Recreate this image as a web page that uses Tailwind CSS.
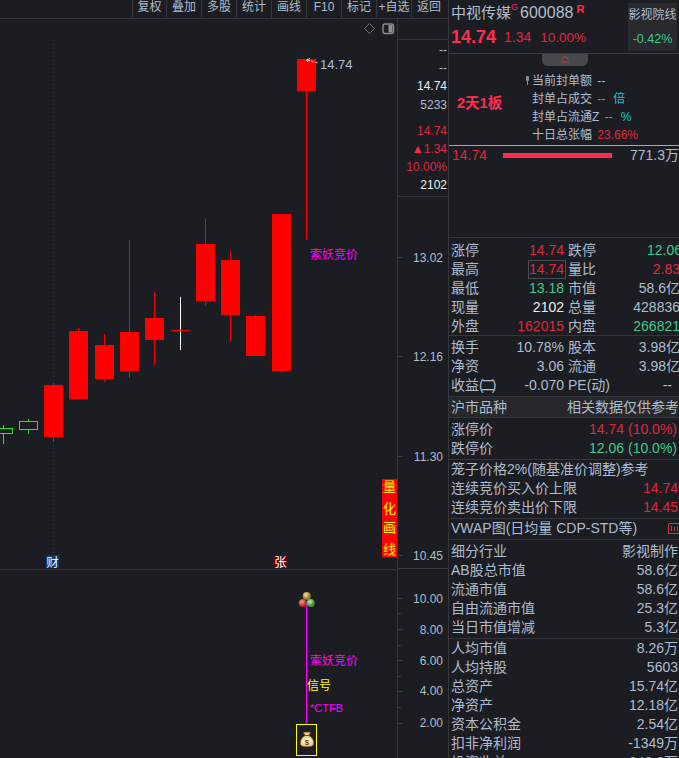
<!DOCTYPE html>
<html lang="zh-CN">
<head>
<meta charset="UTF-8" />
<meta name="viewport" content="width=device-width, initial-scale=1.0"/>
<title>中视传媒 600088</title>
<script src="https://cdn.jsdelivr.net/npm/@tailwindcss/browser@4"></script>
</head>
<body class="bg-[#1c1d22]">
<div class="w-[679px] h-[758px] overflow-hidden flex bg-[#1c1d22] text-[#aebccf] font-['Liberation_Sans','Noto_Sans_CJK_SC',sans-serif]">

  <!-- Left: toolbar + chart -->
  <div class="w-[449px] h-full flex flex-col border-r border-[#34363a]">
    <div class="h-[19px] shrink-0 flex justify-end border-b border-[#34363a] text-[12px] leading-[15px]">
      <div class="w-[34px] text-center border-l border-[#34363a]">复权</div>
      <div class="w-[35px] text-center border-l border-[#34363a]">叠加</div>
      <div class="w-[35px] text-center border-l border-[#34363a]">多股</div>
      <div class="w-[35px] text-center border-l border-[#34363a]">统计</div>
      <div class="w-[35px] text-center border-l border-[#34363a]">画线</div>
      <div class="w-[35px] text-center border-l border-[#34363a]">F10</div>
      <div class="w-[35px] text-center border-l border-[#34363a]">标记</div>
      <div class="w-[35px] text-center border-l border-[#34363a] whitespace-nowrap overflow-hidden">+自选</div>
      <div class="w-[37px] pr-[2px] text-center border-l border-[#34363a]">返回</div>
    </div>

    <div class="flex-1 flex min-h-0">
      <!-- Plot (free canvas: page coordinates in the viewBox) -->
      <svg class="w-[397px] h-[739px] shrink-0 block" viewBox="0 19 397 739" shape-rendering="crispEdges" font-size="12">
        <line x1="53.5" y1="40" x2="53.5" y2="555" stroke="#34363c" stroke-dasharray="1 3"/>
        <line x1="0" y1="569.5" x2="397" y2="569.5" stroke="#34363a"/>

        <!-- hollow green candles -->
        <g stroke="#19f019" fill="#1c1d22">
          <line x1="3.5" y1="425" x2="3.5" y2="444"/>
          <rect x="-2" y="428.5" width="14" height="5"/>
          <line x1="28.5" y1="419" x2="28.5" y2="434"/>
          <rect x="19.5" y="421.5" width="18" height="8"/>
        </g>

        <!-- wicks -->
        <g stroke="#ff0000">
          <line x1="53.5" y1="383" x2="53.5" y2="442"/>
          <line x1="78.5" y1="328" x2="78.5" y2="399"/>
          <line x1="104.5" y1="334" x2="104.5" y2="382"/>
          <line x1="129.5" y1="240" x2="129.5" y2="378"/>
          <line x1="154.5" y1="292" x2="154.5" y2="365"/>
          <line x1="205.5" y1="219" x2="205.5" y2="306"/>
          <line x1="230.5" y1="251" x2="230.5" y2="341"/>
          <line x1="255.5" y1="315" x2="255.5" y2="356"/>
          <line x1="281.5" y1="214" x2="281.5" y2="373"/>
          <line x1="306.5" y1="59" x2="306.5" y2="240"/>
        </g>

        <!-- doji -->
        <line x1="180.5" y1="297" x2="180.5" y2="350" stroke="#ffffff"/>
        <line x1="171" y1="330.5" x2="190" y2="330.5" stroke="#ff0000"/>

        <!-- candle bodies -->
        <g fill="#ff0000">
          <rect x="44" y="385" width="19" height="52"/>
          <rect x="69" y="331" width="19" height="68"/>
          <rect x="95" y="345" width="19" height="34"/>
          <rect x="120" y="332" width="19" height="39"/>
          <rect x="145" y="318" width="19" height="22"/>
          <rect x="196" y="244" width="19" height="57"/>
          <rect x="221" y="260" width="19" height="55"/>
          <rect x="246" y="316" width="19" height="40"/>
          <rect x="272" y="214" width="19" height="157"/>
          <rect x="297" y="59" width="19" height="32"/>
        </g>

        <!-- top-right toggles -->
        <g shape-rendering="auto" fill="none">
          <path d="M369.5 23.5 L374.5 28.5 L369.5 33.5 L364.5 28.5 Z" stroke="#6f7278"/>
          <rect x="383" y="24" width="10.5" height="9.5" rx="2" stroke="#8a8d92" stroke-width="1.4"/>
          <rect x="388.5" y="25" width="4" height="7.5" fill="#8a8d92"/>
        </g>

        <!-- high price marker -->
        <g shape-rendering="auto">
          <path d="M307 60 L318 63" stroke="#d8dce2" stroke-dasharray="3 1" fill="none"/>
          <path d="M310 58.5 L306.5 60 L308 62" stroke="#d8dce2" fill="none"/>
          <text x="320" y="68.5" fill="#aebccf" font-size="13">14.74</text>
          <text x="310" y="259" fill="#ff00ff">索妖竞价</text>
        </g>

        <!-- vertical tag -->
        <rect x="382" y="479" width="15" height="78" fill="#ff0000"/>
        <g shape-rendering="auto" fill="#ffff00" text-anchor="middle" font-size="13">
          <text x="389.5" y="491">量</text>
          <text x="389.5" y="513">化</text>
          <text x="389.5" y="532">画</text>
          <text x="389.5" y="554">线</text>
        </g>

        <!-- event badges -->
        <rect x="46" y="555" width="13" height="13" fill="#0c3a78"/>
        <text x="52.5" y="566.5" fill="#f0f4fa" font-size="12.5" text-anchor="middle" shape-rendering="auto">财</text>
        <rect x="274" y="555" width="13" height="13" fill="#6a0000"/>
        <text x="280.5" y="566.5" fill="#ffffff" font-size="12.5" text-anchor="middle" shape-rendering="auto">张</text>

        <!-- lower pane signal -->
        <line x1="306.5" y1="604" x2="306.5" y2="724" stroke="#ff00ff"/>
        <g shape-rendering="auto">
          <defs>
            <radialGradient id="ballY" cx="40%" cy="35%"><stop offset="0" stop-color="#f5e6a0"/><stop offset="1" stop-color="#9a7a2a"/></radialGradient>
            <radialGradient id="ballR" cx="40%" cy="35%"><stop offset="0" stop-color="#f2a09a"/><stop offset="1" stop-color="#b83028"/></radialGradient>
            <radialGradient id="ballG" cx="40%" cy="35%"><stop offset="0" stop-color="#c4f0a8"/><stop offset="1" stop-color="#3f9a30"/></radialGradient>
          </defs>
          <circle cx="306.7" cy="596" r="4" fill="url(#ballY)"/>
          <circle cx="302.7" cy="603" r="4" fill="url(#ballR)"/>
          <circle cx="310.7" cy="603" r="4" fill="url(#ballG)"/>
          <text x="310" y="664.5" fill="#ff00ff">索妖竞价</text>
          <text x="307" y="689.5" fill="#ffff00">信号</text>
          <text x="310" y="711.5" fill="#ff00ff" font-size="11">*CTFB</text>
        </g>
        <rect x="296.5" y="724.5" width="20" height="31" fill="#1c1d22" stroke="#ffff00"/>
        <g shape-rendering="auto">
          <path d="M303 732 L311 732 L309 735.5 C313.5 738 314.5 742 313.5 745 C312.5 747.5 301.5 747.5 300.5 745 C299.5 742 300.5 738 305 735.5 Z" fill="#f0cf86" stroke="#5a3410" stroke-width="0.8"/>
          <line x1="304.5" y1="735.5" x2="309.5" y2="735.5" stroke="#7a4a18"/>
          <ellipse cx="307" cy="741.5" rx="4.5" ry="3.8" fill="#fbeec4"/>
          <text x="307" y="744.5" fill="#8a3a18" font-size="8" font-weight="bold" text-anchor="middle">$</text>
        </g>
      </svg>

      <!-- Price axis -->
      <div class="w-[51px] shrink-0 flex flex-col border-l border-[#34363a]">
        <div class="h-[21px] shrink-0 border-b border-[#34363a]"></div>
        <div class="h-[157px] shrink-0 border-b border-[#34363a] pt-[1px] text-[12px] leading-[18px] text-right pr-[1px] whitespace-nowrap">
          <div>--</div>
          <div>--</div>
          <div class="text-[#e8eef4] h-[19px]">14.74</div>
          <div>5233</div>
          <div class="h-[8px]"></div>
          <div class="text-[#e0263f]">14.74</div>
          <div class="text-[#e0263f]"><span class="text-[#ff2d4d]">▲</span>1.34</div>
          <div class="text-[#e0263f]">10.00%</div>
          <div class="text-[#e8eef4]">2102</div>
        </div>
        <svg class="w-[51px] h-[561px] block" viewBox="398 198 51 561" font-size="12" fill="#aebccf" text-anchor="end">
          <g stroke="#3a3c42" shape-rendering="crispEdges">
            <line x1="398" y1="258.5" x2="403" y2="258.5"/>
            <line x1="398" y1="357.5" x2="403" y2="357.5"/>
            <line x1="398" y1="457.5" x2="403" y2="457.5"/>
            <line x1="398" y1="556.5" x2="403" y2="556.5"/>
            <line x1="398" y1="569.5" x2="449" y2="569.5"/>
            <line x1="398" y1="599.5" x2="403" y2="599.5"/>
            <line x1="398" y1="614.5" x2="401" y2="614.5"/>
            <line x1="398" y1="630.5" x2="403" y2="630.5"/>
            <line x1="398" y1="646.5" x2="401" y2="646.5"/>
            <line x1="398" y1="661.5" x2="403" y2="661.5"/>
            <line x1="398" y1="677.5" x2="401" y2="677.5"/>
            <line x1="398" y1="692.5" x2="403" y2="692.5"/>
            <line x1="398" y1="708.5" x2="401" y2="708.5"/>
            <line x1="398" y1="724.5" x2="403" y2="724.5"/>
          </g>
          <text x="443" y="263">13.02</text>
          <text x="443" y="362">12.16</text>
          <text x="443" y="462">11.30</text>
          <text x="443" y="561">10.45</text>
          <text x="443" y="603.5">10.00</text>
          <text x="443" y="635">8.00</text>
          <text x="443" y="666">6.00</text>
          <text x="443" y="696">4.00</text>
          <text x="443" y="728">2.00</text>
        </svg>
      </div>
    </div>
  </div>

  <!-- Right: quote panel -->
  <div class="w-[230px] h-full shrink-0 flex flex-col text-[14px] leading-[19px] whitespace-nowrap overflow-hidden">

    <!-- Header -->
    <div class="h-[54px] shrink-0 flex border-b border-[#3a3c40]">
      <div class="flex-1 pl-[2px]">
        <div class="h-[24px] flex items-center">
          <span class="text-[15px]">中视传媒</span><span class="text-[#ff1f7a] text-[9px] leading-[9px] self-start mt-[3px]">G</span>
          <span class="text-[16px] ml-[2px]">600088</span>
          <span class="text-[#ff2d4d] text-[11px] leading-[11px] font-bold ml-[3px] self-start mt-[4px]">R</span>
        </div>
        <div class="flex items-center h-[26px] text-[#e0263f]">
          <span class="text-[18px] font-bold text-[#ff2d4d]">14.74</span>
          <span class="ml-[8px]">1.34</span>
          <span class="ml-[9px] text-[13.5px]">10.00%</span>
        </div>
      </div>
      <div class="w-[49px] h-[48px] mt-[3px] mr-[2px] bg-[#282a2e] text-center text-[12px]">
        <div class="h-[24px] leading-[24px]">影视院线</div>
        <div class="h-[24px] leading-[24px] text-[#3fc98c] text-[12.5px]">-0.42%</div>
      </div>
    </div>

    <!-- Board stats -->
    <div class="h-[92px] shrink-0 relative flex items-center border-b border-[#f0a020]">
      <div class="absolute left-[93px] top-0 w-[46px] h-[12px] bg-[#47484c] rounded-b-[6px] flex justify-center">
        <svg class="w-[12px] h-[10px]" viewBox="0 0 12 10" fill="none" stroke="#d03a40"><path d="M2.5 5 L6 2.5 L9.5 5 M2 8 H10"/></svg>
      </div>
      <div class="w-[83px] pl-[8px] pt-[8px] text-[14.5px] font-bold text-[#ff2d4d]">2天1板</div>
      <div class="pt-[17px] text-[12px] leading-[18px]">
        <div class="relative">
          <svg class="absolute left-[-6px] top-[4px] w-[3px] h-[9px]" viewBox="0 0 3 9" fill="#8a8d92"><rect x="0" y="0" width="3" height="5" rx="1"/><rect x="1" y="5" width="1" height="4"/></svg>
          当前封单额 <span class="ml-[2px]">--</span>
        </div>
        <div>封单占成交 <span class="ml-[2px] text-[#19c4d8]">--</span><span class="ml-[8px] text-[#19c4d8]">倍</span></div>
        <div>封单占流通Z <span class="ml-[2px] text-[#19c4d8]">--</span><span class="ml-[8px] text-[#19c4d8]">%</span></div>
        <div>十日总张幅 <span class="ml-[2px] text-[#e0263f]">23.66%</span></div>
      </div>
    </div>

    <!-- Order line -->
    <div class="h-[92px] shrink-0 border-b border-[#34363a]">
      <div class="flex items-center h-[18px] pl-[3px]">
        <span class="w-[51px] text-[#e0263f]">14.74</span>
        <span class="w-[109px] h-[5px] bg-[#ff2d4d]"></span>
        <span class="flex-1 text-right">771.3万</span>
      </div>
    </div>

    <!-- Quote rows -->
    <div class="h-[98px] shrink-0 pl-[2px] pt-[3px] border-b border-[#34363a]">
      <div class="flex h-[19px]"><span class="w-[40px]">涨停</span><span class="w-[73px] text-right text-[#e0263f]">14.74</span><span class="ml-[4px] w-[40px]">跌停</span><span class="flex-1 text-right mr-[-3px] text-[#3fc98c]">12.06</span></div>
      <div class="flex h-[19px] relative"><span class="w-[40px]">最高</span><span class="w-[73px] text-right text-[#e0263f]">14.74</span><span class="absolute left-[77px] top-0 w-[38px] h-[19px] border border-[#4a4c50]"></span><span class="ml-[4px] w-[40px]">量比</span><span class="flex-1 text-right mr-[-1px] text-[#e0263f]">2.83</span></div>
      <div class="flex h-[19px]"><span class="w-[40px]">最低</span><span class="w-[73px] text-right text-[#3fc98c]">13.18</span><span class="ml-[4px] w-[40px]">市值</span><span class="flex-1 text-right mr-[-1px]">58.6亿</span></div>
      <div class="flex h-[19px]"><span class="w-[40px]">现量</span><span class="w-[73px] text-right text-[#e8eef4]">2102</span><span class="ml-[4px] w-[40px]">总量</span><span class="flex-1 text-right mr-[-1px]">428836</span></div>
      <div class="flex h-[19px]"><span class="w-[40px]">外盘</span><span class="w-[73px] text-right text-[#e0263f]">162015</span><span class="ml-[4px] w-[40px]">内盘</span><span class="flex-1 text-right mr-[-1px] text-[#3fc98c]">266821</span></div>
    </div>
    <div class="h-[60px] shrink-0 pl-[2px] pt-[2px]">
      <div class="flex h-[19px]"><span class="w-[40px]">换手</span><span class="w-[73px] text-right">10.78%</span><span class="ml-[4px] w-[40px]">股本</span><span class="flex-1 text-right mr-[-1px]">3.98亿</span></div>
      <div class="flex h-[19px]"><span class="w-[40px]">净资</span><span class="w-[73px] text-right">3.06</span><span class="ml-[4px] w-[40px]">流通</span><span class="flex-1 text-right mr-[-1px]">3.98亿</span></div>
      <div class="flex h-[19px]"><span class="w-[40px]">收益<span class="tracking-[-3px]">(二)</span></span><span class="w-[73px] text-right">-0.070</span><span class="ml-[4px] w-[50px]">PE(动)</span><span class="flex-1 text-right pr-[7px]">--</span></div>
    </div>

    <!-- Market band -->
    <div class="h-[22px] shrink-0 flex items-center justify-between px-[2px] bg-[#26282c] border-y border-[#34363a]">
      <span>沪市品种</span><span class="mr-[-2px]">相关数据仅供参考</span>
    </div>
    <div class="h-[42px] shrink-0 px-[2px] pt-[2px] border-b border-[#34363a]">
      <div class="flex justify-between h-[19px]"><span>涨停价</span><span class="text-[#e0263f]">14.74 (10.0%)</span></div>
      <div class="flex justify-between h-[19px]"><span>跌停价</span><span class="text-[#3fc98c]">12.06 (10.0%)</span></div>
    </div>
    <div class="h-[59px] shrink-0 px-[2px] border-b border-[#34363a]">
      <div class="h-[19px]">笼子价格2%(随基准价调整)参考</div>
      <div class="flex justify-between h-[19px]"><span>连续竞价买入价上限</span><span class="text-[#e0263f] mr-[-1px]">14.74</span></div>
      <div class="flex justify-between h-[19px]"><span>连续竞价卖出价下限</span><span class="text-[#e0263f] mr-[-1px]">14.45</span></div>
    </div>
    <div class="h-[21px] shrink-0 flex items-center justify-between pl-[2px] pb-[2px] border-b border-[#34363a]">
      <span>VWAP图(日均量 CDP-STD等)</span>
      <svg class="w-[11px] h-[11px]" viewBox="0 0 11 11" fill="none" stroke="#d03a40" shape-rendering="crispEdges"><path d="M0.5 0.5 H11 M0.5 0.5 V10.5 H11 M3.5 3 V8 M6.5 4 V8 M9.5 3 V8"/></svg>
    </div>
    <div class="h-[99px] shrink-0 px-[2px] pt-[2px] border-b border-[#34363a]">
      <div class="flex justify-between h-[19px]"><span>细分行业</span><span class="mr-[-1px]">影视制作</span></div>
      <div class="flex justify-between h-[19px]"><span>AB股总市值</span><span class="mr-[-1px]">58.6亿</span></div>
      <div class="flex justify-between h-[19px]"><span>流通市值</span><span class="mr-[-1px]">58.6亿</span></div>
      <div class="flex justify-between h-[19px]"><span>自由流通市值</span><span class="mr-[-1px]">25.3亿</span></div>
      <div class="flex justify-between h-[19px]"><span>当日市值增减</span><span class="mr-[-1px]">5.3亿</span></div>
    </div>
    <div class="flex-1 px-[2px]">
      <div class="flex justify-between h-[19px]"><span>人均市值</span><span class="mr-[-1px]">8.26万</span></div>
      <div class="flex justify-between h-[19px]"><span>人均持股</span><span class="mr-[-1px]">5603</span></div>
      <div class="flex justify-between h-[19px]"><span>总资产</span><span class="mr-[-1px]">15.74亿</span></div>
      <div class="flex justify-between h-[19px]"><span>净资产</span><span class="mr-[-1px]">12.18亿</span></div>
      <div class="flex justify-between h-[19px]"><span>资本公积金</span><span class="mr-[-1px]">2.54亿</span></div>
      <div class="flex justify-between h-[19px]"><span>扣非净利润</span><span class="mr-[-1px]">-1349万</span></div>
      <div class="flex justify-between h-[19px]"><span>投资收益</span><span class="mr-[-1px]">248.6万</span></div>
    </div>
  </div>
</div>
</body>
</html>
